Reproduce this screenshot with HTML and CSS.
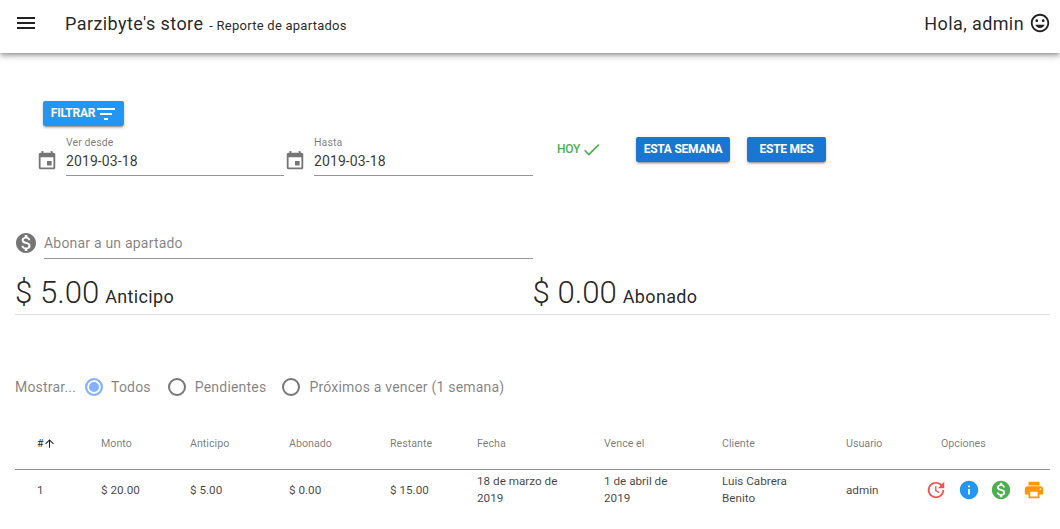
FILE: index.html
```html
<!DOCTYPE html>
<html lang="es">
<head>
<meta charset="utf-8">
<title>Reporte de apartados</title>
<link rel="stylesheet" href="styles.css">
</head>
<body>
<header class="toolbar">
  <svg class="ico menu-ico" viewBox="0 0 24 24"><path d="M3 18h18v-2H3v2zm0-5h18v-2H3v2zm0-7v2h18V6H3z"/></svg>
  <div class="title">Parzibyte's store <small>- Reporte de apartados</small></div>
  <div class="greet">Hola, admin
    <svg class="ico mood" viewBox="0 0 24 24"><path d="M11.99 2C6.47 2 2 6.48 2 12s4.47 10 9.99 10C17.52 22 22 17.52 22 12S17.52 2 11.99 2zM12 20c-4.42 0-8-3.58-8-8s3.58-8 8-8 8 3.58 8 8-3.58 8-8 8zm3.5-9c.83 0 1.5-.67 1.5-1.5S16.33 8 15.5 8 14 8.67 14 9.5s.67 1.5 1.5 1.5zm-7 0c.83 0 1.5-.67 1.5-1.5S9.33 8 8.5 8 7 8.67 7 9.5 7.67 11 8.5 11zm3.5 6.5c2.33 0 4.31-1.46 5.11-3.5H6.89c.8 2.04 2.78 3.5 5.11 3.5z"/></svg>
  </div>
</header>
<main class="content">
  <button class="btn btn-light filter-btn">FILTRAR
    <svg class="ico filter-ico" viewBox="0 0 24 24"><path d="M10 18h4v-2h-4v2zM3 6v2h18V6H3zm3 7h12v-2H6v2z"/></svg>
  </button>
  <section class="dates">
    <div class="field date-a">
      <svg class="ico cal" viewBox="0 0 24 24"><path d="M17 12h-5v5h5v-5zM16 1v2H8V1H6v2H5c-1.11 0-1.99.9-1.99 2L3 19c0 1.1.89 2 2 2h14c1.1 0 2-.9 2-2V5c0-1.1-.9-2-2-2h-1V1h-2zm3 18H5V8h14v11z"/></svg>
      <div class="input"><label>Ver desde</label><span>2019-03-18</span></div>
    </div>
    <div class="field date-b">
      <svg class="ico cal" viewBox="0 0 24 24"><path d="M17 12h-5v5h5v-5zM16 1v2H8V1H6v2H5c-1.11 0-1.99.9-1.99 2L3 19c0 1.1.89 2 2 2h14c1.1 0 2-.9 2-2V5c0-1.1-.9-2-2-2h-1V1h-2zm3 18H5V8h14v11z"/></svg>
      <div class="input"><label>Hasta</label><span>2019-03-18</span></div>
    </div>
    <div class="today">HOY
      <svg class="ico check" viewBox="0 0 24 24"><path d="M21 7L9 19l-5.5-5.5 1.3-1.3L9 16.4 19.7 5.7 21 7z"/></svg>
    </div>
    <button class="btn btn-dark week-btn">ESTA SEMANA</button>
    <button class="btn btn-dark month-btn">ESTE MES</button>
  </section>
  <section class="pay">
    <svg class="ico dollar-ico" viewBox="0 0 24 24"><path d="M12 2C6.48 2 2 6.48 2 12s4.48 10 10 10 10-4.48 10-10S17.52 2 12 2zm1.41 16.09V20h-2.67v-1.93c-1.71-.36-3.16-1.46-3.27-3.4h1.96c.1 1.05.82 1.87 2.65 1.87 1.96 0 2.4-.98 2.4-1.59 0-.83-.44-1.61-2.67-2.14-2.48-.6-4.18-1.62-4.18-3.67 0-1.72 1.39-2.84 3.11-3.21V4h2.67v1.95c1.86.45 2.79 1.86 2.85 3.39H14.3c-.05-1.11-.64-1.87-2.22-1.87-1.5 0-2.4.68-2.4 1.64 0 .84.65 1.39 2.67 1.91s4.18 1.39 4.18 3.91c-.01 1.83-1.38 2.83-3.12 3.16z"/></svg>
    <div class="pay-input">Abonar a un apartado</div>
  </section>
  <section class="totals">
    <div class="total"><span class="amount">$ 5.00</span> <span class="tag">Anticipo</span></div>
    <div class="total"><span class="amount">$ 0.00</span> <span class="tag">Abonado</span></div>
  </section>
  <section class="show">
    <span class="show-label">Mostrar...</span>
    <span class="radio radio-on"><i></i>Todos</span>
    <span class="radio"><i></i>Pendientes</span>
    <span class="radio"><i></i>Próximos a vencer (1 semana)</span>
  </section>
  <table class="grid">
    <colgroup>
      <col class="c1"><col class="c2"><col class="c3"><col class="c4"><col class="c5"><col class="c6"><col class="c7"><col class="c8"><col class="c9"><col class="c10">
    </colgroup>
    <thead>
      <tr>
        <th class="sorted"># <svg class="ico arrow" viewBox="0 0 24 24"><path d="M4 12l1.41 1.41L11 7.83V20h2V7.83l5.58 5.59L20 12l-8-8-8 8z"/></svg></th>
        <th>Monto</th><th>Anticipo</th><th>Abonado</th><th>Restante</th><th>Fecha</th><th>Vence el</th><th>Cliente</th><th>Usuario</th><th>Opciones</th>
      </tr>
    </thead>
    <tbody>
      <tr>
        <td>1</td><td>$ 20.00</td><td>$ 5.00</td><td>$ 0.00</td><td>$ 15.00</td>
        <td>18 de marzo de 2019</td><td>1 de abril de 2019</td><td>Luis Cabrera Benito</td><td>admin</td>
        <td class="actions">
          <svg class="ico act red" viewBox="0 0 24 24"><path d="M21 10.12h-6.78l2.74-2.82c-2.73-2.7-7.15-2.8-9.88-.1-2.73 2.71-2.73 7.08 0 9.79s7.15 2.71 9.88 0C18.32 15.65 19 14.08 19 12.1h2c0 1.98-.88 4.55-2.64 6.29-3.51 3.48-9.21 3.48-12.72 0-3.5-3.47-3.53-9.11-.02-12.58s9.14-3.47 12.65 0L21 3v7.12zM12.5 8v4.25l3.5 2.08-.72 1.21L11 13V8h1.5z"/></svg>
          <svg class="ico act blue" viewBox="0 0 24 24"><path d="M12 2C6.48 2 2 6.48 2 12s4.48 10 10 10 10-4.48 10-10S17.52 2 12 2zm1 15h-2v-6h2v6zm0-8h-2V7h2v2z"/></svg>
          <svg class="ico act green" viewBox="0 0 24 24"><path d="M12 2C6.48 2 2 6.48 2 12s4.48 10 10 10 10-4.48 10-10S17.52 2 12 2zm1.41 16.09V20h-2.67v-1.93c-1.71-.36-3.16-1.46-3.27-3.4h1.96c.1 1.05.82 1.87 2.65 1.87 1.96 0 2.4-.98 2.4-1.59 0-.83-.44-1.61-2.67-2.14-2.48-.6-4.18-1.62-4.18-3.67 0-1.72 1.39-2.84 3.11-3.21V4h2.67v1.95c1.86.45 2.79 1.86 2.85 3.39H14.3c-.05-1.11-.64-1.87-2.22-1.87-1.5 0-2.4.68-2.4 1.64 0 .84.65 1.39 2.67 1.91s4.18 1.39 4.18 3.91c-.01 1.83-1.38 2.83-3.12 3.16z"/></svg>
          <svg class="ico act orange" viewBox="0 0 24 24"><path d="M19 8H5c-1.66 0-3 1.34-3 3v6h4v4h12v-4h4v-6c0-1.66-1.34-3-3-3zm-3 11H8v-5h8v5zm3-7c-.55 0-1-.45-1-1s.45-1 1-1 1 .45 1 1-.45 1-1 1zm-1-9H6v4h12V3z"/></svg>
        </td>
      </tr>
    </tbody>
  </table>
</main>
</body>
</html>
```

FILE: styles.css
```css
* { box-sizing: border-box; }
html, body { margin: 0; height: 529px; overflow: hidden; background: #fff; }
body { font-family: Roboto, "Liberation Sans", sans-serif; color: rgba(0,0,0,.87); }
.ico { display: block; fill: currentColor; flex: none; }

.toolbar {
  height: 53px;
  display: flex;
  align-items: center;
  padding: 0 9px 7px 14px;
  background: #fff;
  box-shadow: 0 2px 4px -1px rgba(0,0,0,.3), 0 4px 5px 0 rgba(0,0,0,.14), 0 1px 10px 0 rgba(0,0,0,.12);
  position: relative;
}
.menu-ico { width: 24px; height: 24px; }
.title { margin-left: 27px; font-size: 18px; letter-spacing: .42px; white-space: nowrap; }
.title small { font-size: 13px; letter-spacing: .25px; margin-left: 1px; }
.greet { margin-left: auto; display: flex; align-items: center; gap: 5px; font-size: 18px; letter-spacing: .4px; }
.mood { width: 22px; height: 22px; }

.content { padding: 48px 10px 0 15px; }

.btn {
  display: flex;
  align-items: center;
  justify-content: center;
  border: 0;
  border-radius: 2px;
  color: #fff;
  font: 700 12px Roboto, sans-serif;
  letter-spacing: -.25px;
  box-shadow: 0 3px 1px -2px rgba(0,0,0,.2), 0 2px 2px 0 rgba(0,0,0,.14), 0 1px 5px 0 rgba(0,0,0,.12);
}
.btn-light { background: #2196f3; }
.btn-dark { background: #1976d2; height: 25px; padding: 0 0 2px; }
.filter-btn { margin-left: 28px; width: 81px; height: 25px; padding: 0 0 2px 1px; gap: 0; }
.filter-ico { width: 24px; height: 24px; margin: 2px -1px 0 -1px; }

.dates { display: flex; align-items: flex-start; margin-top: 8px; height: 52px; }
.field { display: flex; align-items: center; }
.cal { width: 22px; height: 22px; color: rgba(0,0,0,.54); margin-top: 11px; }
.date-a { margin-left: 21px; width: 248px; }
.date-a .input { margin-left: 8px; width: 218px; }
.date-b { width: 249px; }
.date-b .input { margin-left: 8px; width: 219px; }
.input { height: 42px; border-bottom: 1px solid rgba(0,0,0,.42); }
.input label { display: block; font-size: 10.5px; line-height: 12px; letter-spacing: .1px; color: rgba(0,0,0,.54); padding-top: 3px; height: 17px; }
.input span { display: block; font-size: 14px; line-height: 20px; letter-spacing: .1px; color: rgba(0,0,0,.8); }
.today { display: flex; align-items: center; gap: 1px; margin: 5px 0 0 24px; color: #4caf50; font-size: 12px; font-weight: 500; letter-spacing: -.3px; width: 79px; height: 20px; }
.check { width: 21px; height: 21px; }
.week-btn { width: 94px; }
.month-btn { width: 79px; margin-left: 17px; }
.week-btn, .month-btn { margin-top: 3px; }

.pay { display: flex; align-items: center; margin-top: 45px; height: 28px; }
.dollar-ico { width: 24px; height: 24px; color: rgba(0,0,0,.54); margin: -4px 0 0 -1px; }
.pay-input { margin-left: 6px; width: 489px; height: 28px; line-height: 24px; font-size: 14px; letter-spacing: .2px; color: rgba(0,0,0,.5); border-bottom: 1px solid rgba(0,0,0,.42); }

.totals { display: flex; height: 43px; margin-top: 13px; border-bottom: 1px solid rgba(0,0,0,.12); }
.total { width: 518px; white-space: nowrap; line-height: 42px; }
.amount { font-size: 31.2px; font-weight: 300; }
.tag { font-size: 18px; letter-spacing: .35px; margin-left: 2px; }

.show { display: flex; align-items: center; margin-top: 60px; height: 24px; font-size: 14px; letter-spacing: .2px; color: rgba(0,0,0,.5); }
.show-label { width: 70px; }
.radio { display: flex; align-items: center; margin-right: 16px; white-space: nowrap; }
.radio i { display: block; width: 18px; height: 18px; border: 2px solid rgba(0,0,0,.54); border-radius: 50%; margin-right: 9px; }
.radio-on { margin-right: 17px; }
.radio-on i { border-color: #82b1ff; background: #82b1ff; box-shadow: inset 0 0 0 2px #fff; margin-right: 8px; }

.grid { table-layout: fixed; border-collapse: collapse; width: 1035px; margin-top: 21px; }
.c1 { width: 64px; } .c2 { width: 89px; } .c3 { width: 99px; } .c4 { width: 101px; } .c5 { width: 87px; }
.c6 { width: 127px; } .c7 { width: 118px; } .c8 { width: 124px; } .c9 { width: 95px; } .c10 { width: 131px; }
.grid th { height: 49px; padding: 0 0 2px 22px; text-align: left; font-size: 10.7px; font-weight: 400; color: rgba(0,0,0,.54); border-bottom: 1px solid rgba(0,0,0,.25); }
.grid th.sorted { color: rgba(0,0,0,.87); white-space: nowrap; }
.arrow { display: inline-block; width: 13px; height: 13px; vertical-align: -3px; margin-left: -3px; }
.grid td { height: 42px; padding: 0 22px; font-size: 11.7px; line-height: 17px; color: rgba(0,0,0,.75); }
.grid td.actions { padding: 0 0 0 6px; font-size: 0; white-space: nowrap; }
.act { display: inline-block; width: 22px; height: 22px; margin-right: 10.7px; vertical-align: middle; }
.red { color: #ef5350; } .blue { color: #2196f3; } .green { color: #4caf50; } .orange { color: #ff9800; }
```
